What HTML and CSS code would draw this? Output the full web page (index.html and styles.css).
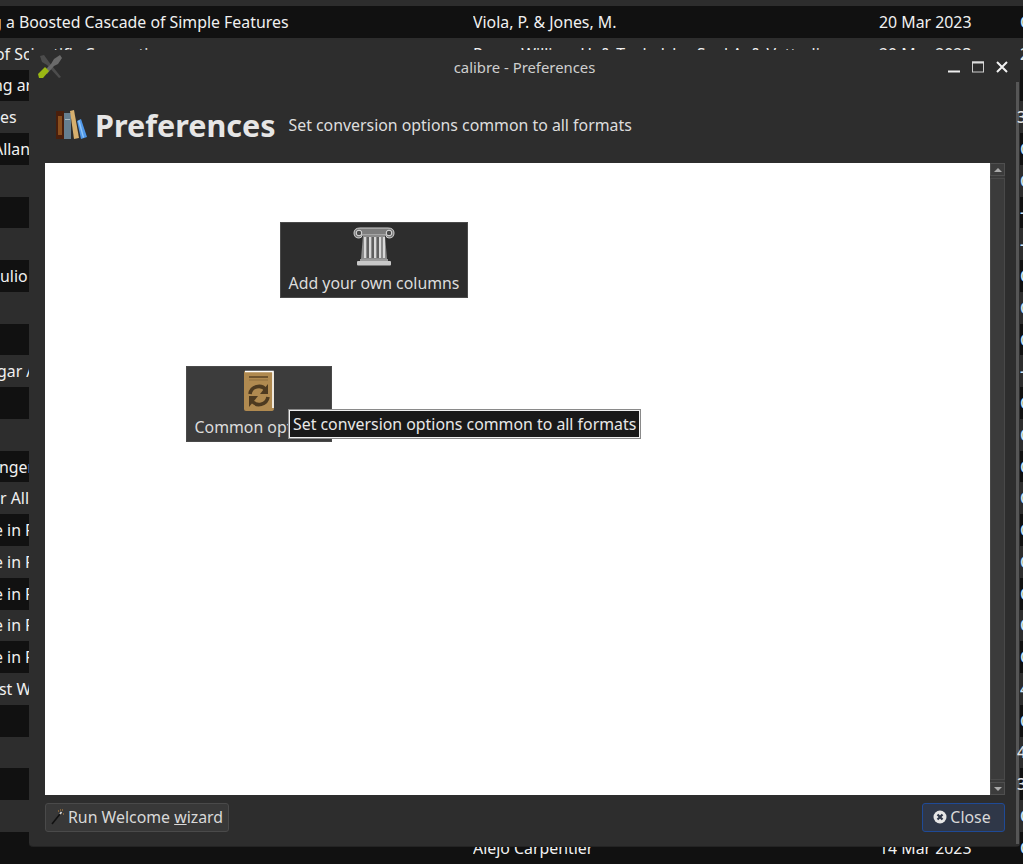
FILE: index.html
```html
<!DOCTYPE html>
<html lang="en">
<head>
<meta charset="utf-8">
<title>calibre - Preferences</title>
<link rel="stylesheet" href="styles.css">
</head>
<body>
<div class="library">
  <div class="row dark"><span class="title" style="text-indent:-8px">g a Boosted Cascade of Simple Features</span><span class="author">Viola, P. &amp; Jones, M.</span><span class="date">20 Mar 2023</span><span class="extra">C</span></div>
  <div class="row"><span class="title" style="text-indent:-5px">of Scientific Computing</span><span class="author">Press, William H. &amp; Teukolsky, Saul A. &amp; Vetterling</span><span class="date">20 Mar 2023</span><span class="extra num">2</span></div>
  <div class="row dark"><span class="title" style="text-indent:-7px">ng ar</span></div>
  <div class="row"><span class="title">es</span><span class="extra num">3</span></div>
  <div class="row dark"><span class="title" style="text-indent:-7px">Allan</span><span class="extra">C</span></div>
  <div class="row"><span class="extra">C</span></div>
  <div class="row dark"><span class="extra">-</span></div>
  <div class="row"><span class="extra">-</span></div>
  <div class="row dark"><span class="title">ulio</span><span class="extra">C</span></div>
  <div class="row"><span class="extra">C</span></div>
  <div class="row dark"><span class="extra">C</span></div>
  <div class="row"><span class="title" style="text-indent:-3px">gar A</span><span class="extra">-</span></div>
  <div class="row dark"><span class="extra">C</span></div>
  <div class="row"><span class="extra">C</span></div>
  <div class="row dark"><span class="title" style="text-indent:-1px">nger</span><span class="extra">C</span></div>
  <div class="row"><span class="title">r All</span><span class="extra">C</span></div>
  <div class="row dark"><span class="title" style="text-indent:-6px">e in F</span><span class="extra">C</span></div>
  <div class="row"><span class="title" style="text-indent:-6px">e in F</span><span class="extra">C</span></div>
  <div class="row dark"><span class="title" style="text-indent:-6px">e in F</span><span class="extra">C</span></div>
  <div class="row"><span class="title" style="text-indent:-6px">e in F</span><span class="extra">C</span></div>
  <div class="row dark"><span class="title" style="text-indent:-6px">e in F</span><span class="extra">C</span></div>
  <div class="row"><span class="title" style="text-indent:-1px">st W</span><span class="extra">4</span></div>
  <div class="row dark"><span class="extra">C</span></div>
  <div class="row"><span class="extra num">4</span></div>
  <div class="row dark"><span class="extra num">3</span></div>
  <div class="row"><span class="extra">C</span></div>
  <div class="row dark"><span class="author">Alejo Carpentier</span><span class="date">14 Mar 2023</span><span class="extra">C</span></div>
</div>

<div class="dialog">
  <svg class="app-icon" viewBox="0 0 26 25" width="26" height="25" aria-hidden="true">
    <path d="M3 2 L7 1 L12 8 L24 23 L22 24 L10 11 L5 8 Z" fill="#4c4c4c"/>
    <path d="M23 1 L25 4 L21 10 L17 12 L10 20 L7 17 L14 10 L17 5 Z" fill="#6a6a6a"/>
    <path d="M1 20 L8 13 L12 17 L6 24 L2 24 Z" fill="#9ab814"/>
  </svg>
  <header class="titlebar">
    <span class="window-title">calibre - Preferences</span>
    <div class="window-controls">
      <svg viewBox="0 0 12 12" width="12" height="12" aria-hidden="true"><path d="M0 10.5H12" stroke="#eee" stroke-width="2"/></svg>
      <svg viewBox="0 0 12 12" width="12" height="12" aria-hidden="true"><rect x="0.5" y="1" width="11" height="10" fill="none" stroke="#ccc"/><path d="M0 1.5H12" stroke="#ddd" stroke-width="2"/></svg>
      <svg viewBox="0 0 12 12" width="12" height="12" aria-hidden="true"><path d="M1 1L11 11M11 1L1 11" stroke="#f2f2f2" stroke-width="2"/></svg>
    </div>
  </header>

  <div class="heading">
    <svg class="books" viewBox="0 0 32 30" width="32" height="30" aria-hidden="true">
      <rect x="1" y="1" width="8" height="28" fill="#4a1f0c"/>
      <rect x="3" y="6" width="4" height="19" fill="#8a4f1e"/>
      <rect x="9" y="3" width="7" height="26" fill="#667f90"/>
      <rect x="10" y="9" width="5" height="1" fill="#a9bac4"/>
      <path d="M15 1 L19 0 L24 28 L19 29 Z" fill="#d7b06e"/>
      <path d="M22 11 L26 9 L32 27 L26 29 Z" fill="#4f97e8"/>
      <path d="M23 11 L24.5 10 L29 27 L28 28 Z" fill="#8fc4f5"/>
    </svg>
    <h1>Preferences</h1>
    <p>Set conversion options common to all formats</p>
  </div>

  <div class="middle">
    <main class="canvas">
      <div class="tile tile-columns">
        <svg viewBox="0 0 42 40" width="42" height="40" aria-hidden="true">
          <path d="M1 6 Q1 1 7 1 H35 Q41 1 41 6 Q41 11 36 11 Q33 11 33 8 H9 Q9 11 6 11 Q1 11 1 6Z" fill="#7d7d7d" stroke="#cfcfcf"/>
          <circle cx="6" cy="6" r="2.8" fill="#4a4a4a" stroke="#e0e0e0"/>
          <circle cx="36" cy="6" r="2.8" fill="#4a4a4a" stroke="#e0e0e0"/>
          <path d="M10 8 H32 L34 32 H8 Z" fill="#8b8b8b"/>
          <path d="M12 10V31M17 10V31M22 10V31M27 10V31M31 10V31" stroke="#ececec" stroke-width="1.6"/>
          <path d="M15 10V31M20 10V31M25 10V31" stroke="#444" stroke-width="1.2"/>
          <rect x="7" y="32" width="28" height="2" fill="#9a9a9a"/>
          <rect x="4" y="34" width="34" height="4.5" rx="1" fill="#c8c8c8"/>
        </svg>
        <span>Add your own columns</span>
      </div>
      <div class="tile tile-common">
        <svg viewBox="0 0 32 42" width="32" height="42" aria-hidden="true">
          <path d="M2 1 H29 Q31 1 31 3 V38 Q31 41 29 41 H3 Q1 41 1 39 V3 Q1 1 2 1Z" fill="#b08a50"/>
          <path d="M2 1.5 H30 V38" fill="none" stroke="#fff" stroke-width="1.6"/>
          <path d="M6 7 H25" stroke="#5e4526" stroke-width="1.6"/>
          <path d="M6 10 H25" stroke="#8e6f3e" stroke-width="1"/>
          <path d="M7 24 A9 9 0 0 1 23 20" fill="none" stroke="#4d3a20" stroke-width="3.6"/>
          <path d="M25 14 V24 H17Z" fill="#4d3a20"/>
          <path d="M25 27 A9 9 0 0 1 9 31" fill="none" stroke="#4d3a20" stroke-width="3.6"/>
          <path d="M6 37 V26 H15Z" fill="#4d3a20"/>
        </svg>
        <span>Common options</span>
      </div>
      <div class="tooltip">Set conversion options common to all formats</div>
    </main>
    <div class="scrollbar">
      <div class="scroll-btn"><i class="arrow-up"></i></div>
      <div class="scroll-track"></div>
      <div class="scroll-btn"><i class="arrow-down"></i></div>
    </div>
  </div>

  <footer class="footer">
    <button class="btn" type="button">
      <svg viewBox="0 0 14 16" width="14" height="16" aria-hidden="true">
        <path d="M1 15L9 5" stroke="#111" stroke-width="1.6"/>
        <path d="M9 5L10.5 3" stroke="#ddd" stroke-width="1.6"/>
        <path d="M7 2h1M11 1h1M12 5h1M9 1h1" stroke="#c98a3c" stroke-width="1.2"/>
      </svg>
      <span>Run Welcome <u>w</u>izard</span>
    </button>
    <button class="btn btn-default" type="button">
      <svg viewBox="0 0 14 14" width="14" height="14" aria-hidden="true">
        <circle cx="7" cy="7" r="6.5" fill="#e6e6e6"/>
        <path d="M4.5 4.5L9.5 9.5M9.5 4.5L4.5 9.5" stroke="#2e3648" stroke-width="2.2"/>
      </svg>
      <span>Close</span>
    </button>
  </footer>
</div>
</body>
</html>
```
FILE: styles.css
```css
html, body {
  margin: 0;
  padding: 0;
  height: 100%;
  overflow: hidden;
  background: #2d2d2d;
  font-family: "Noto Sans", sans-serif;
  color: #dedede;
  font-size: 15.87px;
}

.library {
  display: flex;
  flex-direction: column;
  padding-top: 6px;
  height: 864px;
  box-sizing: border-box;
  overflow: hidden;
  color: #f0f0f0;
}

.row {
  flex: 0 0 31.77px;
  box-sizing: border-box;
  display: flex;
  align-items: center;
  line-height: 28px;
  white-space: nowrap;
}

.row.dark { background: #111; }

.title { width: 473px; overflow: hidden; flex: none; }
.author { width: 406px; overflow: hidden; flex: none; }
.row > .title + .extra, .row > .extra:first-child { margin-left: auto; }
.date { width: 141px; flex: none; }
.extra {
  width: 3px;
  flex: none;
  overflow: hidden;
  color: #cfe4f7;
  font-weight: 500;
}
.extra.num {
  width: 6px;
  position: relative;
  z-index: 2;
  color: #e4e4e4;
}
.row > .author:first-child { margin-left: 473px; }

.dialog {
  position: absolute;
  left: 29px;
  top: 50px;
  width: 991px;
  height: 797px;
  box-sizing: border-box;
  background: #2d2d2d;
  border-radius: 0 0 4px 4px;
  border-bottom: 1px solid #232323;
  border-right: 4px solid #2d2d2d;
  display: flex;
  flex-direction: column;
}

.dialog::after {
  content: "";
  position: absolute;
  right: -3px;
  top: 32px;
  bottom: 2px;
  width: 3px;
  background: #565656;
}

.app-icon { position: absolute; left: 8px; top: 4px; }

.titlebar {
  flex: none;
  height: 33px;
  display: flex;
  align-items: center;
  justify-content: center;
  position: relative;
  font-size: 14.85px;
  color: #cfcfcf;
}

.window-title { margin-left: 4px; }

.window-controls {
  position: absolute;
  right: 8px;
  top: 11px;
  display: flex;
  gap: 12px;
}

.heading {
  flex: none;
  height: 80px;
  display: flex;
  align-items: center;
  padding-left: 26px;
  padding-top: 4px;
  box-sizing: border-box;
}

.books { flex: none; margin-right: 8px; }

.heading h1 {
  margin: 0 13px 0 0;
  font-size: 30.5px;
  font-weight: 700;
  line-height: 40px;
  color: #e6e6e6;
}

.heading p { margin: 0; font-size: 15.87px; color: #dedede; }

.middle {
  flex: none;
  height: 632px;
  display: flex;
  margin-left: 16px;
}

.canvas {
  flex: none;
  width: 945px;
  background: #fff;
  position: relative;
  display: flex;
  flex-direction: column;
  padding-top: 59px;
  gap: 68px;
  box-sizing: border-box;
}

.tile {
  height: 76px;
  box-sizing: border-box;
  background: #2d2d2d;
  border: 1px solid #4a4a4a;
  display: flex;
  flex-direction: column;
  align-items: center;
  color: #dcdcdc;
  overflow: hidden;
}

.tile span { line-height: 22px; white-space: nowrap; }

.tile-columns { margin-left: 235px; width: 188px; padding-top: 4px; }
.tile-columns svg { margin-bottom: 5px; }

.tile-common { margin-left: 141px; width: 146px; background: #3c3c3c; padding-top: 3px; }
.tile-common svg { margin-bottom: 4px; }

.tooltip {
  position: absolute;
  left: 244px;
  top: 247px;
  width: 351px;
  height: 28px;
  box-sizing: border-box;
  background: #191919;
  color: #e8e8e8;
  border: 1px solid #f0f0f0;
  outline: 1px solid #8a8a8a;
  line-height: 26px;
  padding-left: 3px;
  white-space: nowrap;
}

.scrollbar {
  flex: none;
  width: 15px;
  display: flex;
  flex-direction: column;
  background: #3a3a3a;
}

.scroll-btn {
  flex: none;
  height: 13px;
  background: #3c3c3c;
  border: 1px solid #4f4f4f;
  box-sizing: border-box;
  display: flex;
  align-items: center;
  justify-content: center;
}

.scroll-track {
  flex: 1;
  background: #3b3b3b;
  border: 1px solid #494949;
  margin: 2px 0;
}

.arrow-up {
  width: 0; height: 0;
  border-left: 4px solid transparent;
  border-right: 4px solid transparent;
  border-bottom: 4px solid #aaa;
}

.arrow-down {
  width: 0; height: 0;
  border-left: 4px solid transparent;
  border-right: 4px solid transparent;
  border-top: 4px solid #aaa;
}

.footer {
  flex: none;
  display: flex;
  justify-content: space-between;
  align-items: flex-start;
  padding: 8px 11px 0 16px;
}

.btn {
  height: 29px;
  box-sizing: border-box;
  font: inherit;
  color: #d8d8d8;
  background: #383838;
  border: 1px solid #4a4a4a;
  border-radius: 3px;
  display: flex;
  align-items: center;
  gap: 3px;
  padding: 0 5px 1px;
}

.btn-default {
  width: 83px;
  background: #2f3748;
  border: 1px solid #1f4a96;
  color: #d8d8d8;
  justify-content: center;
  gap: 3px;
  padding-right: 8px;
}
```
